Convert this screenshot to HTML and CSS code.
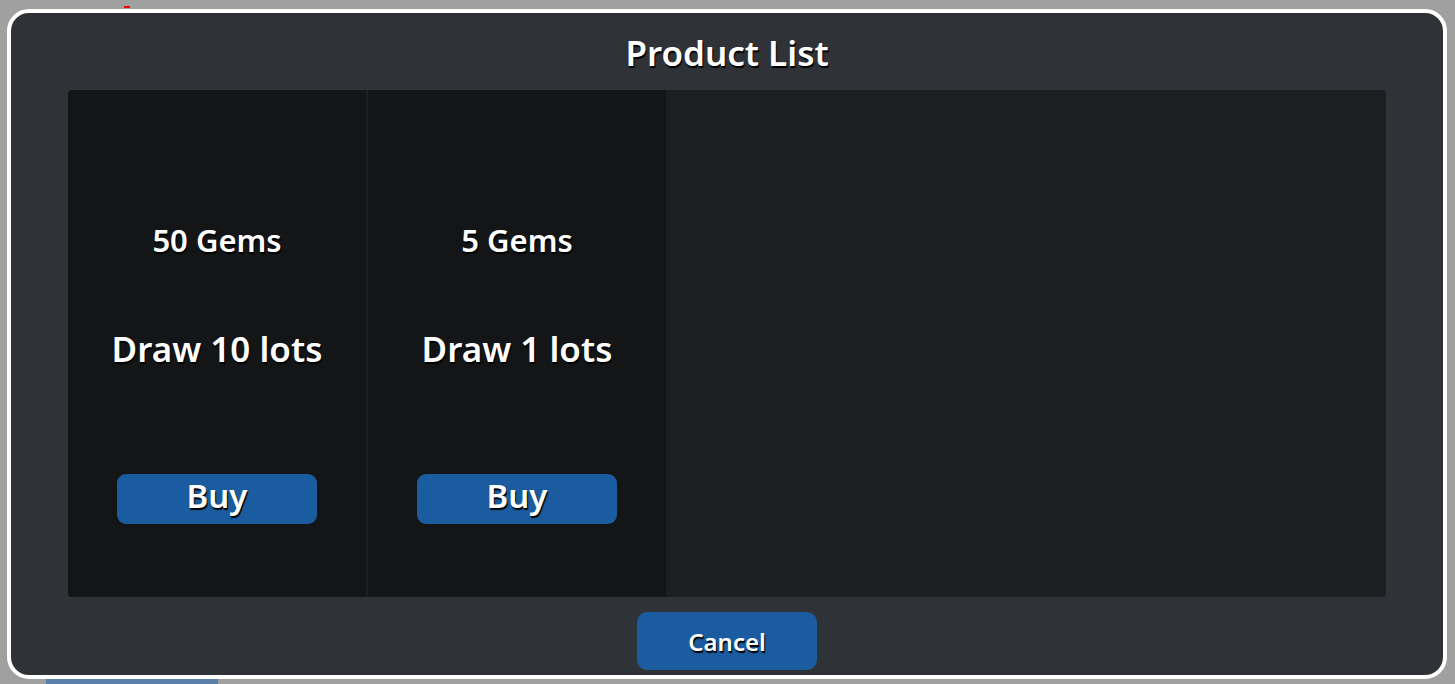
FILE: index.html
```html
<!DOCTYPE html>
<html>
<head>
<meta charset="utf-8">
<link rel="stylesheet" href="styles.css">
</head>
<body>
<div class="stage">
  <div class="mark"></div>
  <div class="under"></div>
  <div class="dialog">
    <h1 class="title">Product List</h1>
    <div class="panel">
      <div class="card">
        <div class="price">50 Gems</div>
        <div class="name">Draw 10 lots</div>
        <button class="buy">Buy</button>
      </div>
      <div class="card">
        <div class="price">5 Gems</div>
        <div class="name">Draw 1 lots</div>
        <button class="buy">Buy</button>
      </div>
    </div>
    <div class="footer">
      <button class="cancel">Cancel</button>
    </div>
  </div>
</div>
</body>
</html>
```

FILE: styles.css
```css
html, body {
  margin: 0;
  padding: 0;
  background: #a0a0a0;
  overflow: hidden;
}
.stage {
  position: relative;
  width: 1455px;
  height: 684px;
  padding: 9px 0 0 7px;
  box-sizing: border-box;
  font-family: "Noto Sans", "Open Sans", sans-serif;
  color: #fff;
}
.mark {
  position: absolute;
  left: 124px;
  top: 6px;
  width: 6px;
  height: 2px;
  background: #ff0000;
}
.under {
  position: absolute;
  left: 46px;
  top: 672px;
  width: 172px;
  height: 20px;
  border-radius: 8px;
  background: #5a7fa9;
}
.dialog {
  position: relative;
  width: 1440px;
  height: 670px;
  box-sizing: border-box;
  border: 4px solid #ffffff;
  border-radius: 22px;
  background: #2f3337;
  display: flex;
  flex-direction: column;
  padding: 0 57px 5px 57px;
}
.title {
  margin: 0;
  height: 77px;
  line-height: 80px;
  text-align: center;
  font-size: 35px;
  font-weight: 600;
  text-shadow: 1px 2px 1px #000;
}
.panel {
  height: 507px;
  background: #1c1f22;
  border-radius: 4px;
  display: flex;
  gap: 2px;
  overflow: hidden;
}
.card {
  width: 298px;
  background: #131517;
  display: flex;
  flex-direction: column;
  align-items: center;
}
.price {
  margin-top: 130px;
  height: 40px;
  line-height: 40px;
  font-size: 31px;
  font-weight: 600;
  text-shadow: 1px 2px 1px #000;
}
.name {
  margin-top: 66px;
  height: 46px;
  line-height: 46px;
  font-size: 35px;
  font-weight: 600;
  text-shadow: 1px 2px 1px #000;
}
.buy {
  margin-top: 102px;
  width: 200px;
  height: 50px;
  border: 0;
  border-radius: 9px;
  background: #1a5c9f;
  color: #fff;
  font-family: inherit;
  font-size: 33px;
  font-weight: 600;
  line-height: 44px;
  padding: 0 0 6px;
  text-shadow: 1px 2px 1px #000;
}
.footer {
  margin-top: 15px;
  display: flex;
  justify-content: center;
}
.cancel {
  width: 180px;
  height: 58px;
  border: 0;
  border-radius: 10px;
  background: #1a5c9f;
  color: #fff;
  font-family: inherit;
  font-size: 24px;
  font-weight: 600;
  padding: 0;
  text-shadow: 1px 2px 1px #000;
}
```
